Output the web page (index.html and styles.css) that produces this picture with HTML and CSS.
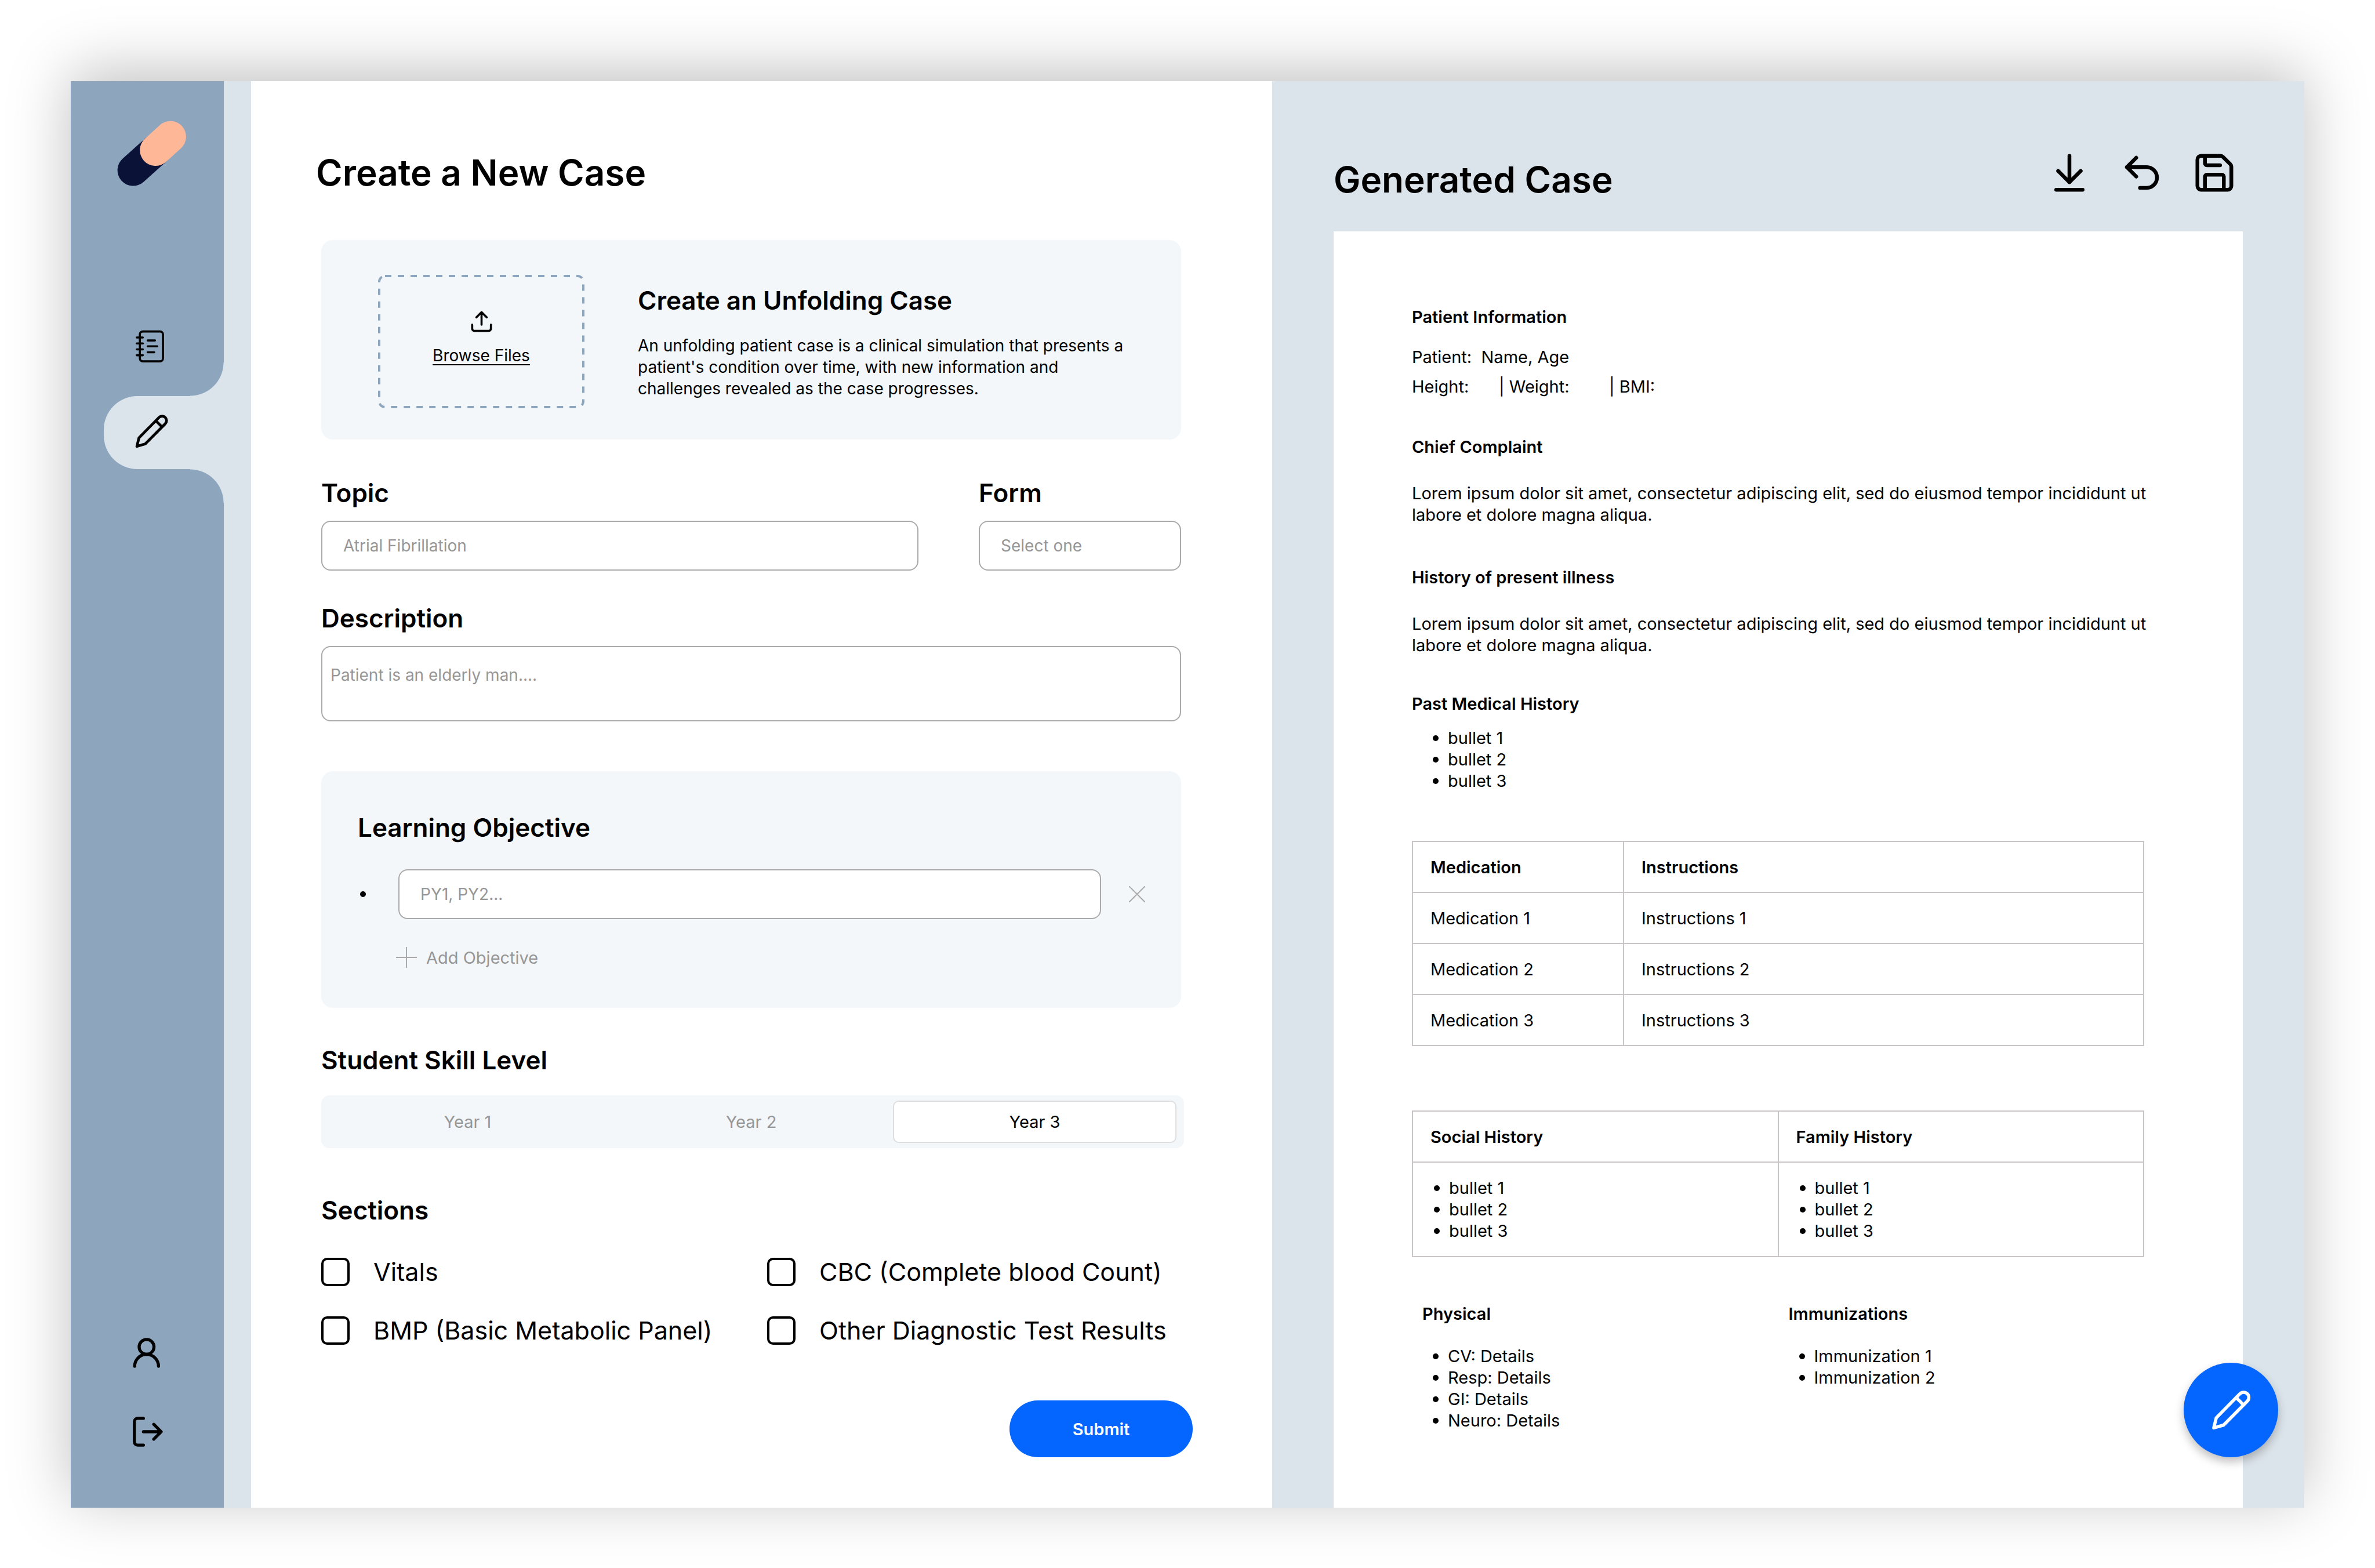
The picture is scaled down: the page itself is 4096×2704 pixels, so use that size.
FILE: index.html
```html
<!DOCTYPE html>
<html lang="en">
<head>
<meta charset="utf-8">
<meta name="viewport" content="width=device-width, initial-scale=1">
<title>Create a New Case</title>
<link rel="stylesheet" href="styles.css">
</head>
<body>
<svg class="sprite" aria-hidden="true">
  <symbol id="pencil" viewBox="118 586 206 208">
    <path d="M129 783 142 730 267 603A27 27 0 0 1 306 642L181 768ZM250 626l32 32"/>
  </symbol>
</svg>

<div class="window">
  <nav class="sidebar" aria-label="Main">
    <svg class="logo" viewBox="242 248 144 136" aria-hidden="true">
      <path d="M275 351 322 309" stroke="#0b1238"/>
      <path d="M321.5 309.4 352.4 281.4" stroke="#feb897"/>
    </svg>
    <a class="nav-link" href="#cases" aria-label="Cases">
      <svg class="icon-notebook" viewBox="118 62 182 206">
        <rect x="146.500" y="71.500" width="144" height="186" rx="18"/>
        <path d="M127 109h38M127 146h38M127 183h38M127 219.500h38M195 127.500h46M195 164h60M195 201h41"/>
      </svg>
    </a>
    <a class="nav-link nav-link-active" href="#create" aria-label="Create" aria-current="page">
      <svg class="icon-pencil"><use href="#pencil"/></svg>
    </a>
    <div class="nav-footer">
      <a class="nav-link" href="#profile" aria-label="Profile">
        <svg class="icon-user" viewBox="218 176 176 194">
          <circle cx="307" cy="236" r="46"/>
          <path d="M233 356a74 74 0 0 1 148 0"/>
        </svg>
      </a>
      <a class="nav-link" href="#logout" aria-label="Log out">
        <svg class="icon-logout" viewBox="215 665 193 194">
          <path d="M284 679h-36a20 20 0 0 0-20 20v126a20 20 0 0 0 20 20h36M284 762h109M348 716l46 46-46 46"/>
        </svg>
      </a>
    </div>
  </nav>

  <main class="form-panel">
    <h1 class="title">Create a New Case</h1>
    <form class="case-form">
      <section class="card upload-card">
        <button class="dropzone" type="button">
          <svg class="dropzone-outline" aria-hidden="true"><rect width="100%" height="100%" rx="10"/></svg>
          <svg class="icon-upload" viewBox="0 0 24 24" aria-hidden="true"><path d="M21 15v4a2 2 0 0 1-2 2H5a2 2 0 0 1-2-2v-4M17 8l-5-5-5 5M12 3v12"/></svg>
          <span class="dropzone-label">Browse Files</span>
        </button>
        <div class="upload-text">
          <h2 class="heading">Create an Unfolding Case</h2>
          <p class="upload-copy">An unfolding patient case is a clinical simulation that presents a patient's condition over time, with new information and challenges revealed as the case progresses.</p>
        </div>
      </section>

      <div class="field-row">
        <div class="field">
          <label class="heading" for="topic">Topic</label>
          <input class="control" id="topic" type="text" placeholder="Atrial Fibrillation">
        </div>
        <div class="field">
          <label class="heading" for="form">Form</label>
          <select class="control" id="form"><option>Select one</option></select>
        </div>
      </div>

      <div class="field description">
        <label class="heading" for="description">Description</label>
        <textarea class="control control-area" id="description" placeholder="Patient is an elderly man...."></textarea>
      </div>

      <section class="card objectives">
        <h2 class="heading"><label for="objective">Learning Objective</label></h2>
        <div class="objective-row">
          <span class="dot"></span>
          <input class="control" id="objective" type="text" placeholder="PY1, PY2...">
          <button class="icon-button" type="button" aria-label="Remove objective">
            <svg class="icon-close" viewBox="0 0 28 28"><path d="M1 1l26 26M27 1 1 27"/></svg>
          </button>
        </div>
        <button class="add-button" type="button">
          <svg class="icon-plus" viewBox="0 0 36 36" aria-hidden="true"><path d="M18 0v36M0 18h36"/></svg>
          Add Objective
        </button>
      </section>

      <fieldset class="skill">
        <legend class="heading">Student Skill Level</legend>
        <div class="segments">
          <label class="segment"><input type="radio" name="year">Year 1</label>
          <label class="segment"><input type="radio" name="year">Year 2</label>
          <label class="segment"><input type="radio" name="year" checked>Year 3</label>
        </div>
      </fieldset>

      <fieldset class="sections">
        <legend class="heading">Sections</legend>
        <div class="checks">
          <label class="check"><input type="checkbox">Vitals</label>
          <label class="check"><input type="checkbox">CBC (Complete blood Count)</label>
          <label class="check"><input type="checkbox">BMP (Basic Metabolic Panel)</label>
          <label class="check"><input type="checkbox">Other Diagnostic Test Results</label>
        </div>
      </fieldset>

      <button class="submit" type="submit">Submit</button>
    </form>
  </main>

  <section class="preview">
    <header class="preview-header">
      <h1 class="title">Generated Case</h1>
      <div class="toolbar">
        <button class="icon-button" type="button" aria-label="Download"><svg viewBox="0 0 24 24"><path d="M12 17V3M6 11l6 6 6-6M19 21H5"/></svg></button>
        <button class="icon-button" type="button" aria-label="Undo"><svg viewBox="0 0 24 24"><path d="M9 14 4 9l5-5M4 9h10.500a5.500 5.500 0 0 1 0 11H11"/></svg></button>
        <button class="icon-button" type="button" aria-label="Save"><svg viewBox="0 0 24 24"><path d="M15.200 3a2 2 0 0 1 1.400.6l3.800 3.800a2 2 0 0 1 .6 1.400V19a2 2 0 0 1-2 2H5a2 2 0 0 1-2-2V5a2 2 0 0 1 2-2zM17 21v-7a1 1 0 0 0-1-1H8a1 1 0 0 0-1 1v7M7 3v4a1 1 0 0 0 1 1h7"/></svg></button>
      </div>
    </header>

    <article class="sheet">
      <section class="block">
        <h2>Patient Information</h2>
        <div class="vitals">
          <p>Patient:&nbsp; Name, Age</p>
          <p class="measures"><span>Height:</span><span>| Weight:</span><span>| BMI:</span></p>
        </div>
      </section>
      <section class="block complaint">
        <h2>Chief Complaint</h2>
        <p>Lorem ipsum dolor sit amet, consectetur adipiscing elit, sed do eiusmod tempor incididunt ut labore et dolore magna aliqua.</p>
      </section>
      <section class="block illness">
        <h2>History of present illness</h2>
        <p>Lorem ipsum dolor sit amet, consectetur adipiscing elit, sed do eiusmod tempor incididunt ut labore et dolore magna aliqua.</p>
      </section>
      <section class="block past">
        <h2>Past Medical History</h2>
        <ul><li>bullet 1</li><li>bullet 2</li><li>bullet 3</li></ul>
      </section>

      <table class="medications">
        <thead><tr><th scope="col">Medication</th><th scope="col">Instructions</th></tr></thead>
        <tbody>
          <tr><td>Medication 1</td><td>Instructions 1</td></tr>
          <tr><td>Medication 2</td><td>Instructions 2</td></tr>
          <tr><td>Medication 3</td><td>Instructions 3</td></tr>
        </tbody>
      </table>

      <table class="histories">
        <thead><tr><th scope="col">Social History</th><th scope="col">Family History</th></tr></thead>
        <tbody>
          <tr>
            <td><ul><li>bullet 1</li><li>bullet 2</li><li>bullet 3</li></ul></td>
            <td><ul><li>bullet 1</li><li>bullet 2</li><li>bullet 3</li></ul></td>
          </tr>
        </tbody>
      </table>

      <div class="findings">
        <section>
          <h2>Physical</h2>
          <ul><li>CV: Details</li><li>Resp: Details</li><li>GI: Details</li><li>Neuro: Details</li></ul>
        </section>
        <section>
          <h2>Immunizations</h2>
          <ul><li>Immunization 1</li><li>Immunization 2</li></ul>
        </section>
      </div>
    </article>
  </section>

  <button class="fab" type="button" aria-label="Edit case"><svg class="icon-pencil"><use href="#pencil"/></svg></button>
</div>
</body>
</html>
```

FILE: styles.css
```css
:root {
  --mist: #dce4eb;
  --slate: #8da6be;
  --pale: #f3f7fa;
  --blue: #0566ff;
  --line: #aaaaaa;
  --muted: #969696;
}

* { box-sizing: border-box; }

body {
  margin: 0;
  padding: 140px 122px 104px;
  background: #fff;
  color: #000;
  font: 400 29px/37px Inter, "Liberation Sans", sans-serif;
}

h1, h2, p, ul, fieldset, legend { margin: 0; padding: 0; }
fieldset { border: 0; min-width: 0; }
button, input, select, textarea { font: inherit; color: inherit; margin: 0; }
button { border: 0; padding: 0; background: none; }

svg {
  display: block;
  fill: none;
  stroke: currentColor;
  stroke-width: 2;
  stroke-linecap: round;
  stroke-linejoin: round;
}

.sprite { position: absolute; width: 0; height: 0; }

.window {
  position: relative;
  display: grid;
  grid-template-columns: 264px minmax(0, 1808fr) minmax(0, 1780fr);
  min-height: calc(100vh - 244px);
  background: var(--mist);
  box-shadow: 0 -16px 100px rgba(0, 0, 0, 0.25);
}

/* Sidebar */
.sidebar {
  display: flex;
  flex-direction: column;
  align-items: flex-start;
  padding: 68px 0 104px;
  background: var(--slate);
}

.logo { width: 120px; height: 113px; margin: 0 0 248px 80px; stroke-width: 65; }

.nav-link { display: block; margin-left: 111px; color: #000; }

.nav-link-active {
  position: relative;
  align-self: stretch;
  height: 126px;
  margin: 57px 0 0 57px;
  padding: 32px 0 0 54px;
  border-radius: 58px 0 0 58px;
  background: var(--mist);
}

.nav-link-active::before,
.nav-link-active::after {
  content: "";
  position: absolute;
  right: 0;
  width: 58px;
  height: 58px;
}

.nav-link-active::before {
  bottom: 100%;
  background: radial-gradient(circle at 0 0, transparent 57px, var(--mist) 58px);
}

.nav-link-active::after {
  top: 100%;
  background: radial-gradient(circle at 0 100%, transparent 57px, var(--mist) 58px);
}

.nav-footer { display: grid; gap: 82px; margin: auto 0 0 106px; }
.nav-footer .nav-link { margin: 0; }

.icon-notebook { width: 51px; height: 57px; stroke-width: 13; }
.icon-pencil { width: 57px; height: 58px; stroke-width: 17; }
.icon-user { width: 49px; height: 54px; stroke-width: 19; }
.icon-logout { width: 54px; height: 54px; stroke-width: 19; }

/* Form */
.form-panel {
  margin-left: 47px;
  padding: 120px 157px 87px 112px;
  background: #fff;
}

.title { font-size: 62px; line-height: 76px; font-weight: 600; }
.heading { display: block; font-size: 44px; line-height: 56px; font-weight: 600; }

.case-form { display: flex; flex-direction: column; margin: 78px 0 0 9px; }

.card { border-radius: 20px; background: var(--pale); }

.upload-card { display: flex; gap: 92px; padding: 60px 80px 54px 98px; font-size: 28px; }

.dropzone {
  position: relative;
  display: flex;
  flex: none;
  flex-direction: column;
  align-items: center;
  gap: 19px;
  width: 356px;
  height: 230px;
  padding-top: 59px;
}

.dropzone-outline {
  position: absolute;
  inset: 2px;
  width: calc(100% - 4px);
  height: calc(100% - 4px);
  overflow: visible;
  stroke: var(--slate);
  stroke-width: 4;
  stroke-linecap: butt;
  stroke-dasharray: 11 11;
}

.icon-upload { width: 43px; height: 43px; }
.dropzone-label { text-decoration: underline 2px; text-underline-offset: 5px; }
.upload-text { max-width: 880px; padding-top: 16px; }
.upload-copy { margin-top: 32px; }

.field-row {
  display: grid;
  grid-template-columns: minmax(0, 1030fr) minmax(0, 349fr);
  gap: 104px;
  margin-top: 64px;
}

.control {
  display: block;
  width: 100%;
  height: 86px;
  margin-top: 20px;
  padding: 0 36px;
  border: 2px solid var(--line);
  border-radius: 16px;
  background: #fff;
  font-size: 28px;
  appearance: none;
}

select.control { color: var(--muted); }
.control::placeholder { color: var(--muted); opacity: 1; }

.description { margin-top: 54px; }
.control-area { height: 130px; padding: 30px 14px; resize: none; }

.objectives { margin-top: 86px; padding: 69px 62px 69px 63px; }

.objective-row { display: flex; align-items: center; margin-top: 44px; }
.objective-row .control { flex: 1; margin: 0 48px 0 56px; }
.dot { flex: none; width: 10px; height: 10px; margin-left: 4px; border-radius: 50%; background: #000; }

.icon-close { width: 28px; height: 28px; color: var(--line); }
.icon-plus { width: 36px; height: 36px; stroke-linecap: butt; color: var(--line); }

.add-button {
  display: flex;
  align-items: center;
  gap: 16px;
  height: 36px;
  margin: 48px 0 0 66px;
  color: var(--muted);
}

.skill { margin-top: 62px; }

.segments {
  display: grid;
  grid-template-columns: repeat(3, 1fr);
  height: 91px;
  margin: 33px -5px 0 0;
  padding: 9px 13px 9px 8px;
  border-radius: 14px;
  background: var(--pale);
}

.segment {
  display: flex;
  align-items: center;
  justify-content: center;
  border: 2px solid transparent;
  border-radius: 10px;
  color: var(--muted);
}

.segment input { position: absolute; opacity: 0; }
.segment:has(:checked) { border-color: #dedede; background: #fff; color: #000; }

.sections { margin-top: 79px; }

.checks {
  display: grid;
  grid-template-columns: 769px auto;
  gap: 52px 0;
  margin-top: 54px;
  font-size: 43px;
  line-height: 49px;
}

.check { display: flex; align-items: center; gap: 41px; white-space: nowrap; }

.check input {
  width: 49px;
  height: 49px;
  border: 4px solid #000;
  border-radius: 10px;
  appearance: none;
}

.submit {
  align-self: flex-end;
  width: 316px;
  height: 98px;
  margin: 96px -20px 0 0;
  border-radius: 49px;
  background: var(--blue);
  color: #fff;
  font-weight: 600;
}

/* Generated case */
.preview {
  display: flex;
  flex-direction: column;
  padding: 119px 106px 0;
}

.preview-header { display: flex; justify-content: space-between; height: 89px; }
.preview-header .title { align-self: flex-end; }

.toolbar { display: flex; align-items: flex-start; gap: 47px; margin-right: 10px; }
.toolbar svg { width: 78px; height: 78px; }

.sheet {
  flex: 1;
  margin-top: 51px;
  padding: 129px 150px 129px 135px;
  background: #fff;
}

.sheet h2 { font-size: inherit; font-weight: 600; }

.block { display: grid; gap: 43px; }
.block:first-child { gap: 32px; }
.vitals { display: grid; gap: 14px; }
.measures { display: grid; grid-template-columns: 150px 190px auto; }
.complaint { margin-top: 67px; }
.illness { margin-top: 71px; }
.past { gap: 22px; margin-top: 64px; }

.sheet ul { padding-left: 36px; list-style: none; }
.sheet li { display: flex; align-items: center; gap: 16px; }
.sheet li::before { content: ""; width: 10px; height: 10px; border-radius: 50%; background: #000; }

.sheet table {
  width: calc(100% - 20px);
  border-collapse: collapse;
  table-layout: fixed;
}

.sheet th, .sheet td {
  height: 88px;
  padding: 0 30px;
  border: 2px solid #c9c4c6;
  text-align: left;
  font-weight: 400;
}

.sheet th { font-weight: 600; }

.medications { margin-top: 85px; }
.medications th:first-child { width: 364px; }
.histories { margin-top: 111px; }
.sheet .histories td { height: 163px; padding: 0; vertical-align: middle; }

.findings { display: grid; grid-template-columns: 1fr 1fr; width: calc(100% - 20px); margin-top: 79px; }
.findings h2 { margin: 0 0 36px 18px; }

.fab {
  position: absolute;
  right: 45px;
  bottom: 87px;
  display: grid;
  place-items: center;
  width: 163px;
  height: 163px;
  border-radius: 50%;
  background: var(--blue);
  color: #fff;
  box-shadow: 0 8px 16px rgba(0, 0, 0, 0.25);
}

.fab .icon-pencil { width: 68px; height: 68px; }
```
